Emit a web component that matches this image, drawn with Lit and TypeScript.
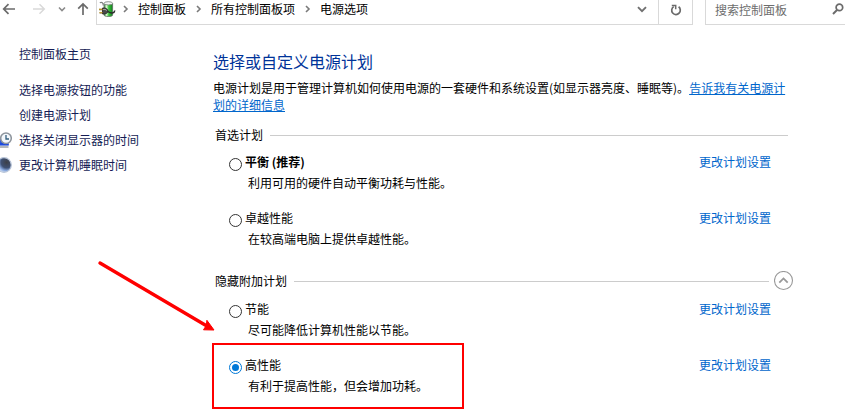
import { LitElement, html, svg, css, nothing } from "lit";
import { customElement, property, state } from "lit/decorators.js";

interface Plan {
  id: string;
  name: string;
  description: string;
  recommended?: boolean;
  marked?: boolean;
}

const PREFERRED: Plan[] = [
  { id: "balanced", name: "平衡 (推荐)", description: "利用可用的硬件自动平衡功耗与性能。", recommended: true },
  { id: "ultimate", name: "卓越性能", description: "在较高端电脑上提供卓越性能。" },
];

const ADDITIONAL: Plan[] = [
  { id: "saver", name: "节能", description: "尽可能降低计算机性能以节能。" },
  { id: "high", name: "高性能", description: "有利于提高性能，但会增加功耗。", marked: true },
];

const chevronRight = html`<svg class="sep" width="6" height="8" viewBox="0 0 6 8" aria-hidden="true">
  <path d="M1 1l3 3-3 3" fill="none" stroke="#7a7a7a" stroke-width="1.6" />
</svg>`;

const batteryIcon = html`<svg class="battery" width="18" height="18" viewBox="0 0 18 18" aria-hidden="true">
  <defs>
    <linearGradient id="cell" x1="0" x2="1" y1="0" y2="0">
      <stop offset="0" stop-color="#3f8f3f" />
      <stop offset=".3" stop-color="#d9f7d2" />
      <stop offset=".55" stop-color="#3cc43c" />
      <stop offset="1" stop-color="#0f7d1c" />
    </linearGradient>
  </defs>
  <path d="M6 3.500V15c0 2 8.600 2 8.600 0V3.500z" fill="url(#cell)" stroke="#5f6b62" stroke-width=".8" />
  <ellipse cx="10.300" cy="3.300" rx="4.300" ry="1.600" fill="#f2f6f2" stroke="#747b76" stroke-width=".8" />
  <path d="M1.800 2.800C3.800 1.500 5.500 3 5.200 5.500" fill="none" stroke="#7d827f" stroke-width="1.200" />
  <path d="M10 11.500c3 2.500 6.500 2 6.800-1" fill="none" stroke="#2b2b2b" stroke-width="1.500" />
  <path d="M4.500 8C7.500 7.500 10 9 10 11s-2.500 3.500-5.500 3z" fill="#4a4a4a" stroke="#1c1c1c" stroke-width=".8" />
  <path d="M5.300 9.500c1.600-.3 2.800.2 3.200 1" fill="none" stroke="#c4c4c4" stroke-width="1" />
  <path d="M1 9.500h3.500M1.500 12.700h3" stroke="#7d6114" stroke-width="1.600" />
  <path d="M1 9.200h3.300M1.500 12.400h2.800" stroke="#e8c34a" stroke-width=".7" />
</svg>`;

const displayClockIcon = html`<svg width="16" height="16" viewBox="0 0 16 16" aria-hidden="true">
  <path d="M0 5h12v8H0z" fill="#2f5ad8" stroke="#b3bac4" stroke-width="1" />
  <path d="M0 11h12.500l.5 2.500H0z" fill="#1c49e0" />
  <path d="M2 15h10.500" stroke="#9a9fa6" stroke-width="1.500" />
  <circle cx="10" cy="6.300" r="5.300" fill="#f3f7fb" stroke="#8d949c" stroke-width="1.500" />
  <path d="M10 3v4h3" fill="none" stroke="#35607e" stroke-width="1.300" />
</svg>`;

const moonIcon = html`<svg width="16" height="16" viewBox="0 0 16 16" aria-hidden="true">
  <defs>
    <radialGradient id="night" cx=".68" cy=".32" r=".75">
      <stop offset="0" stop-color="#3c4048" />
      <stop offset=".5" stop-color="#3f5173" />
      <stop offset=".75" stop-color="#86a6dc" />
      <stop offset="1" stop-color="#dce9fb" />
    </radialGradient>
  </defs>
  <circle cx="8" cy="8" r="7.300" fill="url(#night)" stroke="#b9c5d8" stroke-width="1.200" />
</svg>`;

@customElement("explorer-bar")
export class ExplorerBar extends LitElement {
  static styles = css`
    :host {
      display: flex;
      height: 25px;
      box-sizing: border-box;
      font: inherit;
    }
    button {
      display: flex;
      align-items: center;
      justify-content: center;
      height: 18px;
      padding: 0;
      border: 0;
      background: none;
      font: inherit;
    }
    .history {
      display: flex;
      flex: none;
      width: 96px;
    }
    .arrow { width: 18px; }
    .forward { margin-left: 12px; }
    .recent { width: 12px; margin-left: 8px; }
    .up { margin-left: 6px; }
    .address,
    .search {
      display: flex;
      box-sizing: border-box;
      border: 1px solid #d9d9d9;
      border-top: 0;
    }
    .address { flex: 1; min-width: 0; }
    .battery { flex: none; margin-left: 1px; }
    .crumbs {
      display: flex;
      flex: 1;
      align-items: center;
      height: 18px;
      margin: 0;
      padding: 0 0 0 7px;
      list-style: none;
      white-space: nowrap;
      overflow: hidden;
    }
    .crumbs li { display: flex; align-items: center; }
    .sep { margin-right: 9px; }
    .crumbs a {
      color: #000;
      text-decoration: none;
      margin-right: 10px;
    }
    .dropdown { width: 32px; }
    .refresh {
      width: 34px;
      height: 24px;
      padding-bottom: 5px;
      border-left: 1px solid #d9d9d9;
    }
    .search {
      flex: none;
      width: 140px;
      margin-left: 12px;
      border-right: 0;
    }
    .search input {
      flex: 1;
      min-width: 0;
      height: 18px;
      padding: 0 0 0 9px;
      border: 0;
      outline: 0;
      background: none;
      font: inherit;
      color: #000;
    }
    .search input::placeholder { color: #6d6d6d; opacity: 1; }
    .go { width: 14px; }
  `;

  render() {
    const crumbs = ["控制面板", "所有控制面板项", "电源选项"];
    return html`
      <nav class="history" aria-label="导航">
        <button class="arrow" aria-label="后退">
          <svg width="14" height="12" viewBox="0 0 14 12"><path d="M13 6H2M6.500 1.200L1.700 6l4.800 4.800" fill="none" stroke="#6b6b6b" stroke-width="1.700" /></svg>
        </button>
        <button class="arrow forward" aria-label="前进" disabled>
          <svg width="14" height="12" viewBox="0 0 14 12"><path d="M1 6h11M7.500 1.200L12.300 6l-4.800 4.800" fill="none" stroke="#d9d9d9" stroke-width="1.500" /></svg>
        </button>
        <button class="recent" aria-label="最近浏览的位置">
          <svg width="8" height="6" viewBox="0 0 8 6"><path d="M1 1.500l3 3 3-3" fill="none" stroke="#8a8a8a" stroke-width="1.600" /></svg>
        </button>
        <button class="arrow up" aria-label="上移">
          <svg width="12" height="14" viewBox="0 0 12 14"><path d="M6 13V2M1.200 6.700L6 1.900l4.800 4.800" fill="none" stroke="#6b6b6b" stroke-width="1.700" /></svg>
        </button>
      </nav>
      <div class="address">
        ${batteryIcon}
        <ol class="crumbs">
          ${crumbs.map((c) => html`<li>${chevronRight}<a href="#">${c}</a></li>`)}
        </ol>
        <button class="dropdown" aria-label="上一个位置">
          <svg width="10" height="7" viewBox="0 0 10 7"><path d="M1 1.200l4 4 4-4" fill="none" stroke="#707070" stroke-width="1.900" /></svg>
        </button>
        <button class="refresh" aria-label="刷新">
          <svg width="12" height="12" viewBox="0 0 12 12"><path d="M3.700 2.600A4.300 4.300 0 1 0 8.600 2.800" fill="none" stroke="#6b6b6b" stroke-width="1.700" /><path d="M1.800 1.400h3.900v3.900" fill="none" stroke="#6b6b6b" stroke-width="1.500" /></svg>
        </button>
      </div>
      <div class="search">
        <input type="search" aria-label="搜索控制面板" placeholder="搜索控制面板" />
        <button class="go" aria-label="搜索">
          <svg width="12" height="12" viewBox="0 0 12 12"><circle cx="7.400" cy="4.400" r="3.300" fill="none" stroke="#6b6b6b" stroke-width="1.700" /><path d="M5 7L1 11" stroke="#6b6b6b" stroke-width="2" /></svg>
        </button>
      </div>
    `;
  }
}

@customElement("task-pane")
export class TaskPane extends LitElement {
  static styles = css`
    :host { display: block; }
    a {
      color: #151c55;
      text-decoration: none;
      line-height: 16px;
      white-space: nowrap;
    }
    .home { display: block; margin: 0 0 20px 19px; }
    ul {
      display: grid;
      gap: 9px;
      margin: 0;
      padding: 0;
      list-style: none;
    }
    li { display: flex; height: 16px; }
    .icon {
      display: flex;
      flex: none;
      width: 16px;
      margin: 0 7px 0 -4px;
    }
  `;

  render() {
    const tasks = [
      { text: "选择电源按钮的功能", icon: nothing },
      { text: "创建电源计划", icon: nothing },
      { text: "选择关闭显示器的时间", icon: displayClockIcon },
      { text: "更改计算机睡眠时间", icon: moonIcon },
    ];
    return html`
      <a class="home" href="#">控制面板主页</a>
      <ul>
        ${tasks.map((t) => html`<li><span class="icon">${t.icon}</span><a href="#">${t.text}</a></li>`)}
      </ul>
    `;
  }
}

@customElement("power-plans")
export class PowerPlans extends LitElement {
  static styles = css`
    :host { display: block; color: #000; }
    h1 {
      margin: 0 0 8px;
      font-size: 16px;
      font-weight: 400;
      line-height: 20px;
      color: #039;
    }
    a { color: #06c; }
    .intro { margin: 0; line-height: 17px; }
    section { margin-top: 14px; }
    .more { margin-top: 24px; }
    .legend {
      display: flex;
      align-items: center;
      padding-left: 2px;
    }
    h2 {
      margin: 0 7px 0 0;
      font-size: 12px;
      font-weight: 400;
      line-height: 16px;
    }
    .rule { flex: 1; height: 1px; background: #ccc; }
    .toggle {
      display: flex;
      margin: 0 -6px 0 5px;
      padding: 0;
      border: 0;
      background: none;
    }
    .plans {
      display: grid;
      gap: 19px;
      margin: 11px 0 0;
      padding: 0;
      list-style: none;
    }
    .more .plans { margin-top: 10px; }
    .plan {
      position: relative;
      display: grid;
      grid-template-columns: 13px 1fr auto;
      column-gap: 3px;
      row-gap: 5px;
      padding: 0 17px 0 16px;
      line-height: 16px;
    }
    input {
      appearance: none;
      display: grid;
      place-items: center;
      width: 13px;
      height: 13px;
      margin: 4px 0 -1px;
      box-sizing: border-box;
      border: 1px solid #333;
      border-radius: 50%;
      background: #fff;
    }
    input:checked { border-color: #0078d7; }
    input:checked::before {
      content: "";
      width: 7px;
      height: 7px;
      border-radius: 50%;
      background: #0078d7;
    }
    .recommended { font-weight: 700; }
    .plan a { text-decoration: none; }
    .plan p { grid-column: 2 / 4; margin: 0; padding-left: 3px; }
    .frame {
      position: absolute;
      left: -1px;
      top: -14px;
      width: 252px;
      height: 66px;
      box-sizing: border-box;
      border: 2px solid #f00;
      pointer-events: none;
    }
    .pointer {
      position: absolute;
      left: -117px;
      top: -98px;
      pointer-events: none;
    }
  `;

  @property({ type: String }) selected = "high";
  @state() private expanded = true;

  private renderPlan(plan: Plan) {
    return html`<li class="plan">
      <input
        type="radio"
        name="plan"
        id=${plan.id}
        .checked=${plan.id === this.selected}
        @change=${() => (this.selected = plan.id)}
      />
      <label for=${plan.id} class=${plan.recommended ? "recommended" : ""}>${plan.name}</label>
      <a href="#">更改计划设置</a>
      <p>${plan.description}</p>
      ${plan.marked
        ? html`<span class="frame"></span>
            <svg class="pointer" width="120" height="76" viewBox="0 0 120 76" aria-hidden="true">
              ${svg`<path d="M4 4L110 66.500" stroke="#f00" stroke-width="3.400" stroke-linecap="round" /><path d="M118 71l-10.500-.2 2.800-4.300.6-5.200z" fill="#f00" stroke="#f00" stroke-width="1" />`}
            </svg>`
        : nothing}
    </li>`;
  }

  render() {
    return html`
      <h1>选择或自定义电源计划</h1>
      <p class="intro">电源计划是用于管理计算机如何使用电源的一套硬件和系统设置(如显示器亮度、睡眠等)。<a href="#">告诉我有关电源计划的详细信息</a></p>
      <section>
        <div class="legend"><h2>首选计划</h2><span class="rule"></span></div>
        <ul class="plans">${PREFERRED.map((p) => this.renderPlan(p))}</ul>
      </section>
      <section class="more">
        <div class="legend">
          <h2>隐藏附加计划</h2><span class="rule"></span>
          <button class="toggle" aria-label="隐藏附加计划" aria-expanded=${this.expanded} @click=${() => (this.expanded = !this.expanded)}>
            <svg width="20" height="20" viewBox="0 0 20 20"><circle cx="9.500" cy="9.500" r="9" fill="#fff" stroke="#999" stroke-width="1.100" /><path d="M5.300 11.600L9.500 7.400l4.200 4.200" fill="none" stroke="#999" stroke-width="1.800" /></svg>
          </button>
        </div>
        ${this.expanded ? html`<ul class="plans">${ADDITIONAL.map((p) => this.renderPlan(p))}</ul>` : nothing}
      </section>
    `;
  }
}

@customElement("app-root")
export class AppRoot extends LitElement {
  static styles = css`
    :host {
      display: block;
      min-height: 100vh;
      overflow: hidden;
      background: #fff;
      font: 12px/16px "Noto Sans CJK SC", "Noto Sans", sans-serif;
    }
    .body {
      display: grid;
      grid-template-columns: 213px 1fr;
      padding: 21px 57px 8px 0;
    }
    main { padding-top: 5px; }
  `;

  render() {
    return html`
      <explorer-bar></explorer-bar>
      <div class="body">
        <task-pane></task-pane>
        <main><power-plans></power-plans></main>
      </div>
    `;
  }
}
